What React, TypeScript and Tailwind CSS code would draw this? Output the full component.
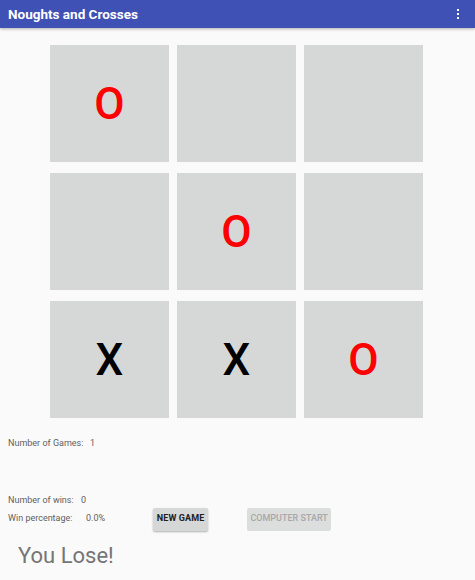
const board: string[] = ["O", "", "", "", "O", "", "X", "X", "O"];

const Cell = ({ mark }: { mark: string }) => (
  <div className="flex h-[117px] w-[119px] items-center justify-center bg-[#d6d7d7]">
    <span
      className={`text-[44px] font-medium leading-none ${mark === "O" ? "text-[#ff0000]" : "text-black"}`}
    >
      {mark}
    </span>
  </div>
);

const App = () => {
  return (
    <div className="h-[580px] w-[475px] overflow-hidden bg-[#fafafa] font-['Roboto',sans-serif]">
      {/* Toolbar */}
      <header className="flex h-[28px] items-center justify-between bg-[#3f51b5] pl-[8px] pr-[16px] shadow-[0_1px_3px_rgba(0,0,0,0.3)]">
        <h1 className="text-[13.5px] font-bold text-white">Noughts and Crosses</h1>
        <div className="flex flex-col gap-[2px]">
          <span className="h-[2px] w-[2px] bg-white" />
          <span className="h-[2px] w-[2px] bg-white" />
          <span className="h-[2px] w-[2px] bg-white" />
        </div>
      </header>

      {/* Board */}
      <div className="ml-[50px] mt-[17px] grid w-fit grid-cols-3 gap-x-[8px] gap-y-[11px]">
        {board.map((m, i) => (
          <Cell key={i} mark={m} />
        ))}
      </div>

      {/* Stats */}
      <div className="mt-[19px] flex pl-[8px] text-[9px] text-[#616161]">
        <span className="w-[82px]">Number of Games:</span>
        <span>1</span>
      </div>

      <div className="mt-[43px] flex">
        <div className="flex flex-col pl-[8px] text-[9px] text-[#616161]">
          <div className="flex">
            <span className="w-[73px]">Number of wins:</span>
            <span>0</span>
          </div>
          <div className="mt-[5px] flex">
            <span className="w-[78px]">Win percentage:</span>
            <span>0.0%</span>
          </div>
        </div>
        <div className="ml-[48px] mt-[14px] flex gap-[39px]">
          <button className="h-[23px] w-[55px] rounded-[2px] bg-[#d6d7d7] text-[9px] font-bold tracking-[0.1px] text-[#212121] shadow-[0_1px_2px_rgba(0,0,0,0.3)]">
            NEW GAME
          </button>
          <button className="h-[23px] w-[84px] rounded-[2px] bg-[#dcdddd] text-[9px] font-medium text-[#a8a8a8]">
            COMPUTER START
          </button>
        </div>
      </div>

      <p className="mt-[8px] pl-[18px] text-[22px] text-[#757575]">You Lose!</p>
    </div>
  );
};

export default App;
